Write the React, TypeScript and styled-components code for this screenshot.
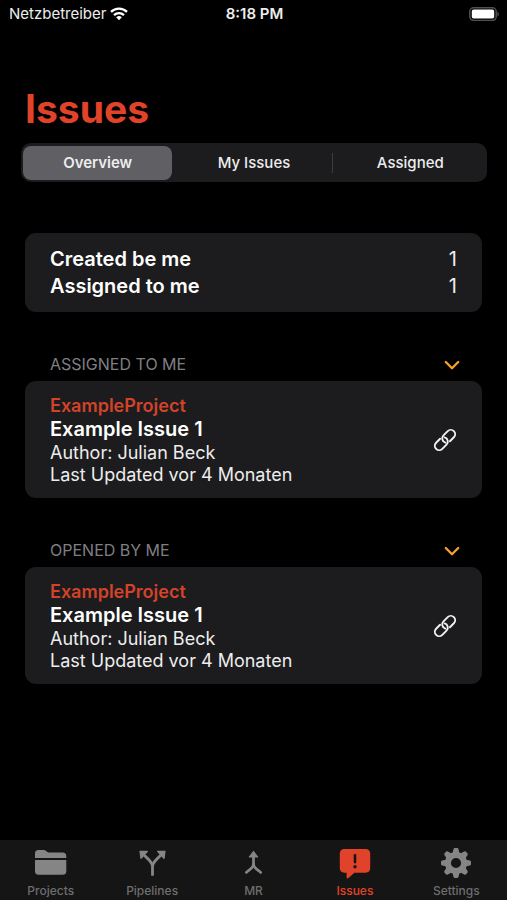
import React, { useState } from "react";
import styled, { createGlobalStyle } from "styled-components";

const GlobalStyle = createGlobalStyle`
  *, *::before, *::after { box-sizing: border-box; }
  body {
    margin: 0;
    background: #000;
    color: #ededed;
    font-family: Inter, "Liberation Sans", sans-serif;
  }
  button { font: inherit; color: inherit; background: none; border: 0; padding: 0; cursor: pointer; }
  svg { display: block; }
`;

const accent = "#e0432a";

const Screen = styled.div`
  display: flex;
  flex-direction: column;
  min-height: 100vh;
`;

const StatusBar = styled.header`
  display: grid;
  grid-template-columns: 1fr auto 1fr;
  align-items: center;
  height: 27px;
  padding: 0 7px 0 9px;
  font-size: 15px;
`;

const Carrier = styled.div`
  display: flex;
  align-items: center;
  gap: 4px;
`;

const Clock = styled.time`
  font-weight: 600;
`;

const BatterySlot = styled.div`
  display: flex;
  justify-content: flex-end;
`;

const Content = styled.main`
  flex: 1;
  padding: 57px 25px 24px;
`;

const Title = styled.h1`
  margin: 0;
  color: ${accent};
  font-size: 39px;
  line-height: 50px;
  font-weight: 700;
`;

const Segments = styled.div`
  display: flex;
  align-items: center;
  margin: 9px -5px 0 -4px;
  padding: 2px;
  height: 39px;
  border-radius: 10px;
  background: #1c1c1e;
`;

const Segment = styled.button<{ $active: boolean }>`
  flex: 1 1 0;
  height: 34px;
  border-radius: 8px;
  font-size: 15px;
  line-height: 32px;
  font-weight: ${(p) => (p.$active ? 600 : 500)};
  background: ${(p) => (p.$active ? "#5f5f64" : "transparent")};
`;

const Divider = styled.span<{ $visible: boolean }>`
  width: 1px;
  height: 20px;
  margin: 0 3px;
  background: ${(p) => (p.$visible ? "#3c3c3f" : "transparent")};
`;

const Card = styled.div`
  display: flex;
  align-items: center;
  justify-content: space-between;
  padding: 13px 25px 12px;
  border-radius: 11px;
  background: #1c1c1e;
`;

const Summary = styled.dl`
  flex: 1;
  margin: 0;
`;

const SummaryRow = styled.div`
  display: flex;
  justify-content: space-between;
  font-size: 20px;
  line-height: 27px;
`;

const SummaryLabel = styled.dt`
  font-weight: 600;
  color: #fff;
`;

const SummaryValue = styled.dd`
  margin: 0;
`;

const SummaryCard = styled(Card)`
  margin-top: 51px;
`;

const Section = styled.section`
  margin-top: 41px;
`;

const SectionHeader = styled.div`
  display: flex;
  align-items: flex-start;
  justify-content: space-between;
  height: 28px;
  padding: 0 21px 0 25px;
`;

const SectionTitle = styled.h2`
  margin: 0;
  color: #7f7f83;
  font-size: 16px;
  line-height: 22px;
  font-weight: 400;
  text-transform: uppercase;
`;

const Toggle = styled.button`
  padding-top: 6px;
`;

const ProjectName = styled.div`
  color: #d24329;
  font-size: 18px;
  line-height: 23px;
  font-weight: 600;
`;

const IssueTitle = styled.h3`
  margin: 0;
  color: #fff;
  font-size: 20px;
  line-height: 25px;
  font-weight: 600;
`;

const IssueMeta = styled.div`
  font-size: 18px;
  line-height: 22px;
`;

const IssueLink = styled.a`
  color: inherit;
`;

const TabBar = styled.nav`
  display: flex;
  height: 60px;
  background: #151515;
`;

const Tab = styled.button<{ $active: boolean }>`
  flex: 1 1 0;
  display: flex;
  flex-direction: column;
  align-items: center;
  padding-top: 6px;
  color: ${(p) => (p.$active ? accent : "#858585")};
  font-size: 12px;
  line-height: 16px;
  font-weight: 500;
`;

const TabLabel = styled.span<{ $active: boolean }>`
  margin-top: 3px;
  color: ${(p) => (p.$active ? accent : "#6e6e6e")};
`;

const WifiIcon = () => (
  <svg width="18" height="14" viewBox="0 0 18 14" fill="none" stroke="#fff" strokeWidth="2.3" aria-label="Wi-Fi">
    <path d="M1 4.9a11.4 11.4 0 0 1 16 0" />
    <path d="M4 8.1a7.2 7.2 0 0 1 10 0" />
    <path d="M9 13.2l-2.8-2.9a4 4 0 0 1 5.6 0z" fill="#fff" stroke="none" />
  </svg>
);

const BatteryIcon = () => (
  <svg width="31" height="14" viewBox="0 0 31 14" aria-label="Battery full">
    <rect x="0.8" y="0.8" width="26.4" height="12.6" rx="3.8" fill="none" stroke="#505052" strokeWidth="1.5" />
    <rect x="2.8" y="2.6" width="22.4" height="9" rx="1.8" fill="#fff" />
    <path d="M28.4 4.8c2 .8 2 3.8 0 4.6z" fill="#505052" />
  </svg>
);

const ChevronIcon = () => (
  <svg width="18" height="12" viewBox="0 0 18 12" fill="none" stroke="#f5a32f" strokeWidth="2.3" strokeLinecap="round" strokeLinejoin="round">
    <path d="M2.8 3L9 9.2 15.2 3" />
  </svg>
);

const LinkIcon = () => (
  <svg width="24" height="24" viewBox="0 0 24 24" fill="none" stroke="#f2f2f2" strokeWidth="1.9" strokeLinecap="round">
    <g transform="translate(12 12) rotate(-45)">
      <path d="M-1.6 2.15A4.35 4.35 0 0 1 2.2 -4.35H8.2A4.35 4.35 0 0 1 8.2 4.35H2.6" />
      <path d="M1.6 -2.15A4.35 4.35 0 0 1 -2.2 4.35H-8.2A4.35 4.35 0 0 1 -8.2 -4.35H-2.6" />
    </g>
  </svg>
);

const FolderIcon = () => (
  <svg width="34" height="34" viewBox="0 0 34 34" fill="currentColor">
    <path d="M1 12V7.5C1 5.2 2.2 4 4.4 4h4.800c1.300 0 2 .3 2.900 1.100l.9.7c.7.6 1.200.7 2.100.7h13.600c2.200 0 3.600 1.200 3.600 3.600V12z" />
    <path d="M1 14h31.300v11.200c0 2.400-1.400 3.600-3.600 3.600H4.600C2.400 28.800 1 27.600 1 25.200z" />
  </svg>
);

const SplitIcon = () => (
  <svg width="34" height="34" viewBox="0 0 34 34" fill="none" stroke="currentColor" strokeWidth="2.8">
    <path d="M17.500 29.800V20.500C17.500 15.500 12 12.500 8 8" />
    <path d="M17.500 20.500C17.500 15.500 23 12.500 27 8" />
    <path d="M5 5.400h7.400l-6.400 7z" fill="currentColor" strokeWidth="1.200" strokeLinejoin="round" />
    <path d="M30 5.400h-7.400l6.400 7z" fill="currentColor" strokeWidth="1.200" strokeLinejoin="round" />
  </svg>
);

const MergeIcon = () => (
  <svg width="34" height="34" viewBox="0 0 34 34" fill="none" stroke="currentColor" strokeWidth="2.700" strokeLinecap="round">
    <path d="M16.500 10v8c0 4-4.300 5.700-7.200 8.400" />
    <path d="M16.500 18c0 4 4.300 5.700 7.200 8.400" />
    <path d="M16.500 5.500l4.200 5.500h-8.400z" fill="currentColor" strokeWidth="1.200" strokeLinejoin="round" />
  </svg>
);

const BubbleIcon = () => (
  <svg width="34" height="34" viewBox="0 0 34 34">
    <path
      d="M6.400 3h21.200C30.500 3 32.200 4.700 32.200 7.600v14.500c0 2.900-1.700 4.600-4.600 4.600H16.400l-5.900 5.400c-1 .9-1.900.4-1.900-.8v-4.600H6.400c-2.900 0-4.600-1.700-4.600-4.600V7.600C1.800 4.700 3.500 3 6.400 3z"
      fill="currentColor"
    />
    <path d="M17 9.300v6.800" stroke="#151515" strokeWidth="2.600" strokeLinecap="round" />
    <circle cx="17" cy="20.700" r="1.700" fill="#151515" />
  </svg>
);

const GearIcon = () => (
  <svg width="34" height="34" viewBox="0 0 34 34">
    <circle cx="17" cy="17" r="8.100" fill="none" stroke="currentColor" strokeWidth="6" />
    {[0, 45, 90, 135, 180, 225, 270, 315].map((angle) => (
      <path
        key={angle}
        d="M13.400 8l1.100-4.900Q14.800 2 15.900 2h2.200q1.100 0 1.400 1.100L20.600 8z"
        fill="currentColor"
        transform={`rotate(${angle} 17 17)`}
      />
    ))}
  </svg>
);

const segments = ["Overview", "My Issues", "Assigned"];

const tabs = [
  { label: "Projects", Icon: FolderIcon },
  { label: "Pipelines", Icon: SplitIcon },
  { label: "MR", Icon: MergeIcon },
  { label: "Issues", Icon: BubbleIcon },
  { label: "Settings", Icon: GearIcon },
];

const issue = {
  project: "ExampleProject",
  title: "Example Issue 1",
  author: "Julian Beck",
  updated: "vor 4 Monaten",
};

const sections = [
  { title: "Assigned to me", issues: [issue] },
  { title: "Opened by me", issues: [issue] },
];

export default function App() {
  const [segment, setSegment] = useState(0);
  const [tab, setTab] = useState("Issues");
  const [collapsed, setCollapsed] = useState<string[]>([]);

  const toggle = (title: string) =>
    setCollapsed((c) => (c.includes(title) ? c.filter((t) => t !== title) : [...c, title]));

  return (
    <Screen>
      <GlobalStyle />
      <StatusBar>
        <Carrier>
          Netzbetreiber
          <WifiIcon />
        </Carrier>
        <Clock>8:18 PM</Clock>
        <BatterySlot>
          <BatteryIcon />
        </BatterySlot>
      </StatusBar>

      <Content>
        <Title>Issues</Title>
        <Segments>
          {segments.map((label, i) => (
            <React.Fragment key={label}>
              {i > 0 && <Divider $visible={segment !== i && segment !== i - 1} />}
              <Segment $active={segment === i} aria-pressed={segment === i} onClick={() => setSegment(i)}>
                {label}
              </Segment>
            </React.Fragment>
          ))}
        </Segments>

        <SummaryCard>
          <Summary>
            <SummaryRow>
              <SummaryLabel>Created be me</SummaryLabel>
              <SummaryValue>1</SummaryValue>
            </SummaryRow>
            <SummaryRow>
              <SummaryLabel>Assigned to me</SummaryLabel>
              <SummaryValue>1</SummaryValue>
            </SummaryRow>
          </Summary>
        </SummaryCard>

        {sections.map(({ title, issues }) => (
          <Section key={title}>
            <SectionHeader>
              <SectionTitle>{title}</SectionTitle>
              <Toggle
                aria-label={`Toggle ${title}`}
                aria-expanded={!collapsed.includes(title)}
                onClick={() => toggle(title)}
              >
                <ChevronIcon />
              </Toggle>
            </SectionHeader>
            {!collapsed.includes(title) &&
              issues.map((item) => (
                <Card key={item.title}>
                  <div>
                    <ProjectName>{item.project}</ProjectName>
                    <IssueTitle>{item.title}</IssueTitle>
                    <IssueMeta>Author: {item.author}</IssueMeta>
                    <IssueMeta>Last Updated {item.updated}</IssueMeta>
                  </div>
                  <IssueLink href="#issue" aria-label="Open issue">
                    <LinkIcon />
                  </IssueLink>
                </Card>
              ))}
          </Section>
        ))}
      </Content>

      <TabBar>
        {tabs.map(({ label, Icon }) => (
          <Tab key={label} $active={tab === label} onClick={() => setTab(label)}>
            <Icon />
            <TabLabel $active={tab === label}>{label}</TabLabel>
          </Tab>
        ))}
      </TabBar>
    </Screen>
  );
}
